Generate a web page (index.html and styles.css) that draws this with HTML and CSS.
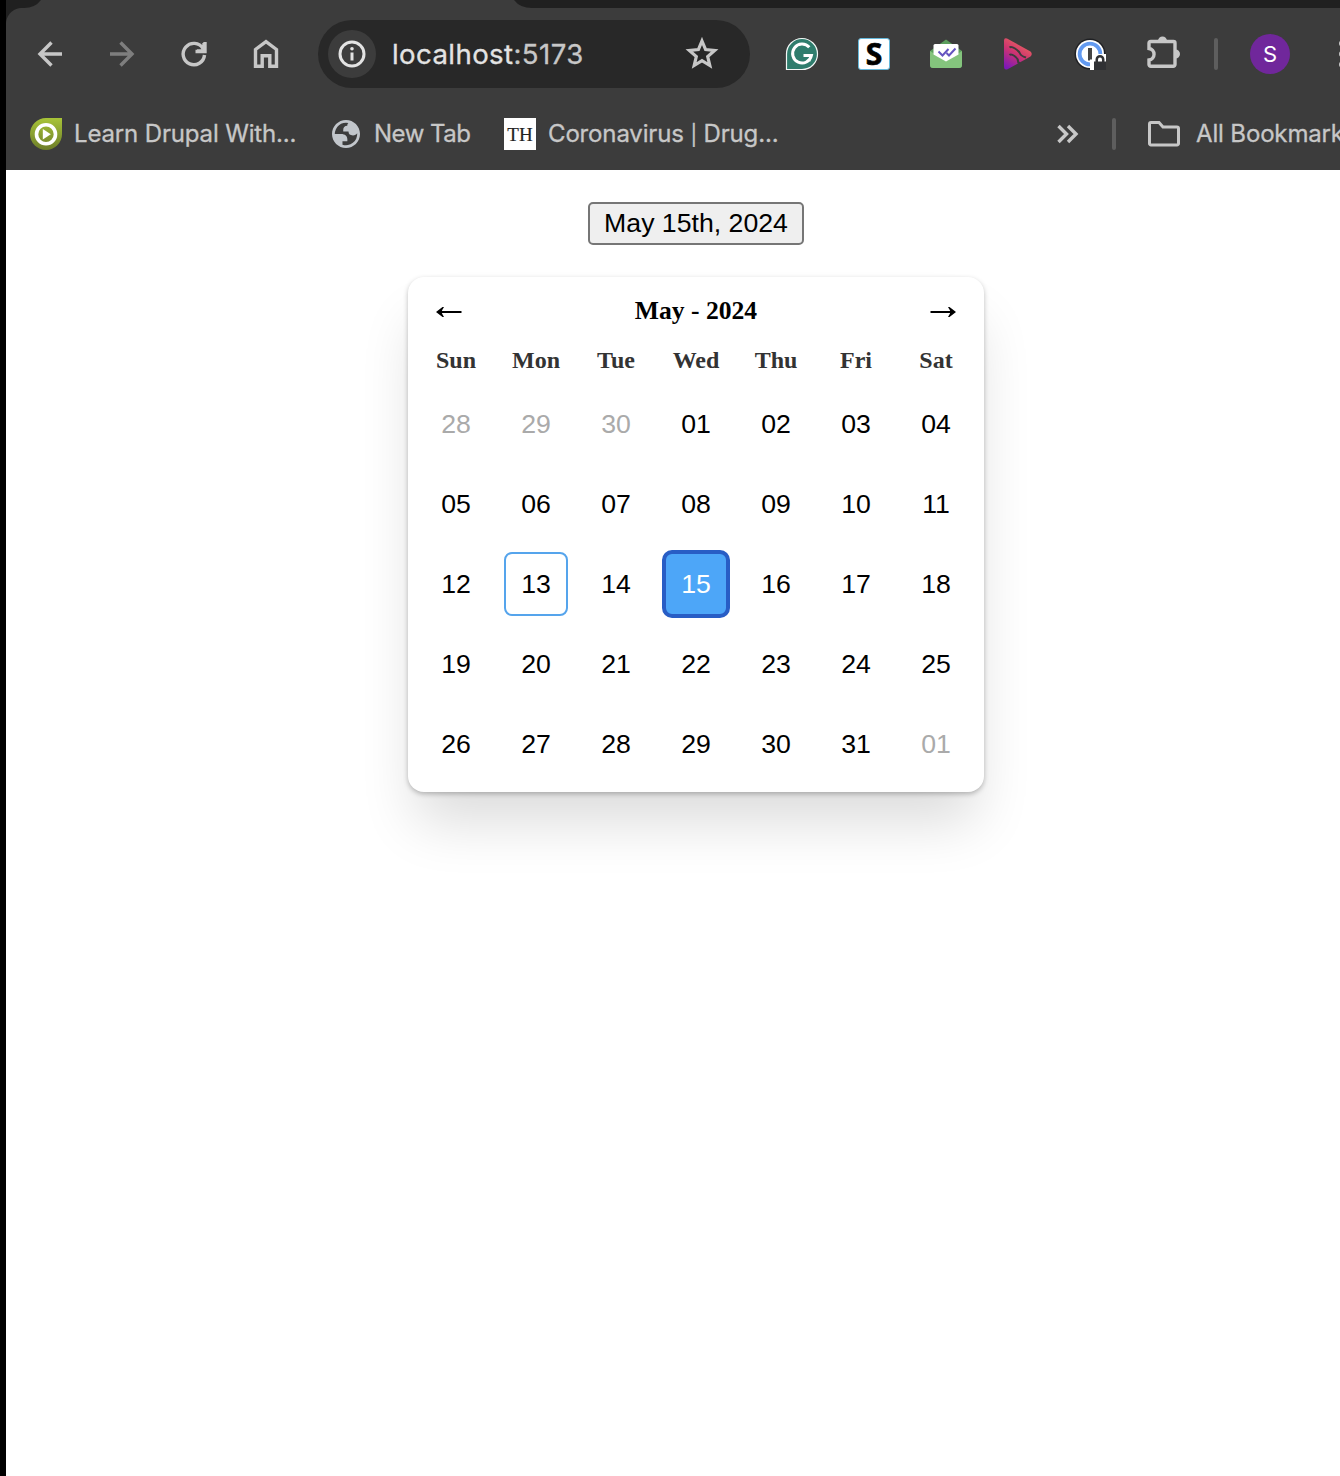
FILE: index.html
```html
<!DOCTYPE html>
<html lang="en">
<head>
<meta charset="utf-8">
<title>Date picker</title>
<link rel="stylesheet" href="styles.css">
</head>
<body>
<div class="window">
  <header class="chrome">
    <div class="tabstrip">
      <svg width="1334" height="8" viewBox="6 0 1334 8"><path d="M6 0H41Q35 8 24 8H6Z" fill="#202020"/><path d="M514 0Q520 8 532 8H1340V0Z" fill="#202020"/></svg>
    </div>
    <div class="corner"></div>
    <div class="toolbar">
      <svg class="tool" viewBox="0 0 48 48"><path d="M36 24H14M25.500 12.500 14 24l11.500 11.500" class="line w3"/></svg>
      <svg class="tool dim" viewBox="0 0 48 48"><path d="M12 24H34M22.500 12.500 34 24 22.500 35.500" class="line w3"/></svg>
      <svg class="tool" viewBox="0 0 48 48"><path d="M34.500 25A10.700 10.700 0 1 1 33 18.500M35 12V21.500H25.500M34 13V21L27 21" class="line w3"/></svg>
      <svg class="tool" viewBox="0 0 48 48"><path d="M13.500 36.300V19.500L24 11.700l10.500 7.800V36.300H27.800V25.700H20.200V36.300Z" class="line w3"/></svg>
      <div class="omnibox">
        <span class="info"><svg width="48" height="48" viewBox="0 0 48 48"><circle cx="24" cy="24" r="12" fill="none" stroke="#e3e3e3" stroke-width="3"/><path d="M24 22.500v8" stroke="#e3e3e3" stroke-width="3"/><circle cx="24" cy="18.800" r="1.800" fill="#e3e3e3"/></svg></span>
        <span class="url">localhost<span class="port">:5173</span></span>
        <svg class="star" viewBox="0 0 48 48"><path d="M24 11l3.600 8.600 9 .9-6.900 6 2.100 9L24 30.700l-7.800 4.800 2.100-9-6.900-6 9-.9Z" class="line star-line"/></svg>
      </div>
      <div class="extensions">
        <svg class="tool" viewBox="0 0 48 48"><path d="M8.500 39.500V24A15.500 15.500 0 1 1 24 39.500Z" fill="#2f7d6d" stroke="#f4f7f6" stroke-width="1.200"/><path d="M31.300 17.300A9.500 9.500 0 1 0 33.400 25.500H25.500M33.400 25.500 31 31" fill="none" stroke="#fff" stroke-width="3"/></svg>
        <svg class="tool" viewBox="0 0 48 48"><rect x="8.500" y="8.500" width="31" height="31" rx="2.500" fill="#fff" stroke="#65b9dc"/><text x="24" y="34.500" class="s-mark">S</text></svg>
        <svg class="tool" viewBox="0 0 48 48"><path d="M8 21 24 9.500 40 21V35a3 3 0 0 1-3 3H11a3 3 0 0 1-3-3Z" fill="#5c9e5d"/><path d="M8 21 24 31 40 21V35a3 3 0 0 1-3 3H11a3 3 0 0 1-3-3Z" fill="#84c47d"/><path d="M11.500 15.500a1.500 1.500 0 0 1 1.500-1.500h22a1.500 1.500 0 0 1 1.500 1.500V24.500L24 31.500 11.500 24.500Z" fill="#fff"/><path d="m16.500 21.500 4 4 6-6.500m-2 4 2.500 2.500 6.500-7" fill="none" stroke="#6554c0" stroke-width="2"/></svg>
        <svg class="tool" viewBox="0 0 48 48"><defs><linearGradient id="play" x1=".75" y1="0" x2=".2" y2="1"><stop offset="0" stop-color="#ef7059"/><stop offset=".5" stop-color="#cf3470"/><stop offset="1" stop-color="#7d18b8"/></linearGradient></defs><path d="M10 10.500Q10 7.500 13 8.500L36.500 21.500Q39 24 36.500 26.500L14 39Q10 41 10 36Z" fill="url(#play)"/><path d="M15.500 17.500Q17 16 21 18.500T26 23.500 32 27.500M15.500 25Q17 23.500 20.500 26T24 31 26 32.500" fill="none" stroke="#3c3c3c" stroke-width="2"/></svg>
        <svg class="tool" viewBox="0 0 48 48"><circle cx="24" cy="24" r="15.500" fill="#202124"/><circle cx="24" cy="24" r="14" fill="#fff"/><circle cx="24" cy="24" r="10.400" fill="#fff" stroke="#629af1" stroke-width="3.800"/><rect x="22" y="18" width="4" height="12.500" fill="#454545"/><path d="M24 40V29.500h4v-3l3-2.500h9v16Z" fill="#fff"/><path d="M28 40V31.500h1.500V29.500a4.500 4.500 0 0 1 9 0v2H40V40Z" fill="#303134"/><path d="M32 31.500V29.500a2 2 0 0 1 4 0v2Z" fill="#fff"/></svg>
        <svg class="tool" viewBox="0 0 48 48"><path d="M13 11.500H35.500a1.500 1.500 0 0 1 1.500 1.500V34.500a1.800 1.800 0 0 1-1.800 1.800H12.800A1.800 1.800 0 0 1 11 34.500V30a5.800 5.800 0 0 0 0-11.500V13.300a1.800 1.800 0 0 1 1.800-1.800Z" class="line w3"/><path d="M20 11a4.500 4.500 0 0 1 9 0ZM37.500 19.500a4.500 4.500 0 0 1 0 9Z" fill="#c7c7c7"/></svg>
      </div>
      <span class="divider"></span>
      <span class="avatar">S</span>
      <svg class="menu" width="8" height="28" viewBox="0 0 8 28"><circle cx="4" cy="3.500" r="3"/><circle cx="4" cy="14" r="3"/><circle cx="4" cy="24.500" r="3"/></svg>
    </div>
    <nav class="bookmarks">
      <span class="bookmark learn"><svg width="32" height="32" viewBox="0 0 32 32"><defs><linearGradient id="leaf" x1="0" y1="0" x2="0" y2="1"><stop offset="0" stop-color="#a8c438"/><stop offset="1" stop-color="#6d7d29"/></linearGradient></defs><path d="M16 0H32V16A16 16 0 1 1 16 0Z" fill="url(#leaf)"/><circle cx="16" cy="16.300" r="9.500" fill="none" stroke="#fff" stroke-width="3.600"/><path d="M12.800 11v10.500l8-5.200Z" fill="#fff"/></svg><span class="label">Learn Drupal With...</span></span>
      <span class="bookmark newtab"><svg width="28" height="28" viewBox="2 2 20 20"><path fill="#c2c6cb" fill-rule="evenodd" d="M12 2C6.480 2 2 6.480 2 12s4.480 10 10 10 10-4.480 10-10S17.520 2 12 2zM4 12h4.400c3.407.022 4.922 1.730 4.543 5.127H9.488v2.470a8.004 8.004 0 0 0 10.498-8.083C19.327 12.504 18.332 13 17 13c-2.137 0-3.206-.916-3.206-2.750h-3.748c-.274-2.728.683-4.092 2.870-4.092 0-.975.327-1.597.811-1.970A8.004 8.004 0 0 0 4 12z"/></svg><span class="label">New Tab</span></span>
      <span class="bookmark corona"><span class="th">TH</span><span class="label">Coronavirus <span class="bar">|</span> Drug...</span></span>
      <svg class="more" width="24" height="20" viewBox="0 0 24 20"><path d="m2.500 2 8 8-8 8M12 2l8 8-8 8" class="line w3"/></svg>
      <span class="divider"></span>
      <span class="bookmark all"><svg width="34" height="28" viewBox="0 0 34 28"><path d="M5 2.500h8l4 4.500H31a1.500 1.500 0 0 1 1.500 1.500V23.500A1.500 1.500 0 0 1 31 25H5a1.500 1.500 0 0 1-1.500-1.500V4A1.500 1.500 0 0 1 5 2.500Z" class="line folder-line"/></svg><span class="label">All Bookmarks</span></span>
    </nav>
  </header>
  <main class="page">
    <button class="date-button">May 15th, 2024</button>
    <section class="picker">
      <div class="picker-head">
        <button class="arrow" aria-label="Previous month"><svg width="26" height="14" viewBox="0 0 26 14"><path d="M2 7H25.500" stroke="#000" stroke-width="2"/><path d="M0 7 6.500 2H8Q6 5 5.500 7 6 9 8 12H6.500Z"/></svg></button>
        <h1 class="month">May - 2024</h1>
        <button class="arrow" aria-label="Next month"><svg width="26" height="14" viewBox="0 0 26 14"><path d="M.5 7H24" stroke="#000" stroke-width="2"/><path d="M26 7 19.500 2H18Q20 5 20.500 7 20 9 18 12H19.500Z"/></svg></button>
      </div>
      <div class="week names"><span>Sun</span><span>Mon</span><span>Tue</span><span>Wed</span><span>Thu</span><span>Fri</span><span>Sat</span></div>
      <div class="week days">
        <button class="day out">28</button><button class="day out">29</button><button class="day out">30</button><button class="day">01</button><button class="day">02</button><button class="day">03</button><button class="day">04</button>
        <button class="day">05</button><button class="day">06</button><button class="day">07</button><button class="day">08</button><button class="day">09</button><button class="day">10</button><button class="day">11</button>
        <button class="day">12</button><button class="day today">13</button><button class="day">14</button><button class="day selected">15</button><button class="day">16</button><button class="day">17</button><button class="day">18</button>
        <button class="day">19</button><button class="day">20</button><button class="day">21</button><button class="day">22</button><button class="day">23</button><button class="day">24</button><button class="day">25</button>
        <button class="day">26</button><button class="day">27</button><button class="day">28</button><button class="day">29</button><button class="day">30</button><button class="day">31</button><button class="day out">01</button>
      </div>
    </section>
  </main>
</div>
</body>
</html>
```
FILE: styles.css
```css
* { box-sizing: border-box; }
html { background: #000; overflow: hidden; }
body { margin: 0; height: 1476px; overflow: hidden; font-family: Inter, sans-serif; }
svg { display: block; flex: none; }
button { font-family: "Liberation Sans", Arial, sans-serif; font-size: 26.667px; color: #000; padding: 0; margin: 0; border: 0; background: none; }
.line { fill: none; stroke: #c7c7c7; }
.w3 { stroke-width: 3.4; }
.star-line { stroke-width: 3.2; }
.folder-line { stroke-width: 3; }

.window { margin-left: 6px; height: 1476px; overflow: hidden; background: #fff; }
.chrome { position: relative; height: 170px; background: #3c3c3c; overflow: hidden; }
.tabstrip { height: 8px; }
.corner { position: absolute; left: 0; top: 8px; width: 16px; height: 16px; background: radial-gradient(circle at 100% 100%, transparent 15.5px, #202020 16.5px); }
.toolbar { display: flex; align-items: center; height: 92px; padding-left: 8px; width: 1400px; }
.tool { width: 72px; height: 48px; }
.dim { opacity: .48; }
.omnibox { display: flex; align-items: center; width: 432px; height: 68px; margin: 0 16px; padding: 0 24px 0 10px; border-radius: 34px; background: #282828; }
.info { width: 48px; height: 48px; border-radius: 50%; background: #3c3c3c; }
.url { margin-left: 16px; flex: 1; font-size: 27.6px; letter-spacing: .4px; -webkit-text-stroke: .3px; color: #e3e3e3; white-space: nowrap; }
.port { color: #c7c7c7; }
.star { width: 48px; height: 48px; }
.extensions { display: flex; }
.s-mark { font: 700 30px "Open Sans", sans-serif; text-anchor: middle; stroke: #000; stroke-width: .7px; }
.divider { flex: none; width: 4px; height: 32px; border-radius: 2px; background: #5e5e5e; }
.toolbar .divider { margin-left: 16px; }
.avatar { display: flex; align-items: center; justify-content: center; width: 40px; height: 40px; margin-left: 32px; border-radius: 50%; background: #70279b; color: #fff; font-size: 22px; }
.menu { margin-left: 48px; fill: #c7c7c7; }

.bookmarks { display: flex; align-items: center; height: 68px; padding-left: 24px; width: 1400px; font-size: 24px; letter-spacing: -.15px; -webkit-text-stroke: .3px; color: #c7c7c7; }
.bookmark { display: flex; align-items: center; flex: none; white-space: nowrap; }
.label { padding-bottom: 1px; }
.learn { width: 302px; gap: 12px; }
.newtab { width: 172px; gap: 14px; letter-spacing: -.5px; }
.corona { width: 552px; gap: 12px; }
.bar { font-size: 20px; }
.all { margin-left: 30px; gap: 16px; }
.th { width: 32px; height: 32px; background: #fff; color: #222; font: 19px/34px "Liberation Serif", serif; text-align: center; letter-spacing: 0; -webkit-text-stroke: .2px #222; }
.bookmarks .divider { margin-left: 32px; }

.page { display: flex; flex-direction: column; align-items: center; width: 1380px; padding-top: 32px; }
.date-button { width: 216px; height: 43px; padding-bottom: 1px; border: 2px solid #767676; border-radius: 5px; background: #efefef; line-height: 38px; }
.picker { width: 576px; height: 515px; margin-top: 32px; padding: 16px; border-radius: 16px; background: #fff; box-shadow: 0 38px 56px -8px rgba(0, 0, 0, .14), 0 2px 5px rgba(0, 0, 0, .25); }
.picker-head { display: flex; justify-content: space-between; align-items: center; height: 37px; padding: 0 12px; }
.month { margin: 0; padding-bottom: 2px; font: bold 25.6px "Liberation Serif", serif; }
.week { display: grid; grid-template-columns: repeat(7, 64px); gap: 16px; }
.names { height: 62px; font: bold 24px/60px "Liberation Serif", serif; color: #333; text-align: center; }
.day { width: 64px; height: 64px; border-radius: 8px; }
.out { color: #aaa; }
.today { border: 2px solid #55a4ec; }
.selected { background: #4da6f8; color: #fff; outline: 4px solid #285dc5; outline-offset: -2px; }
```
